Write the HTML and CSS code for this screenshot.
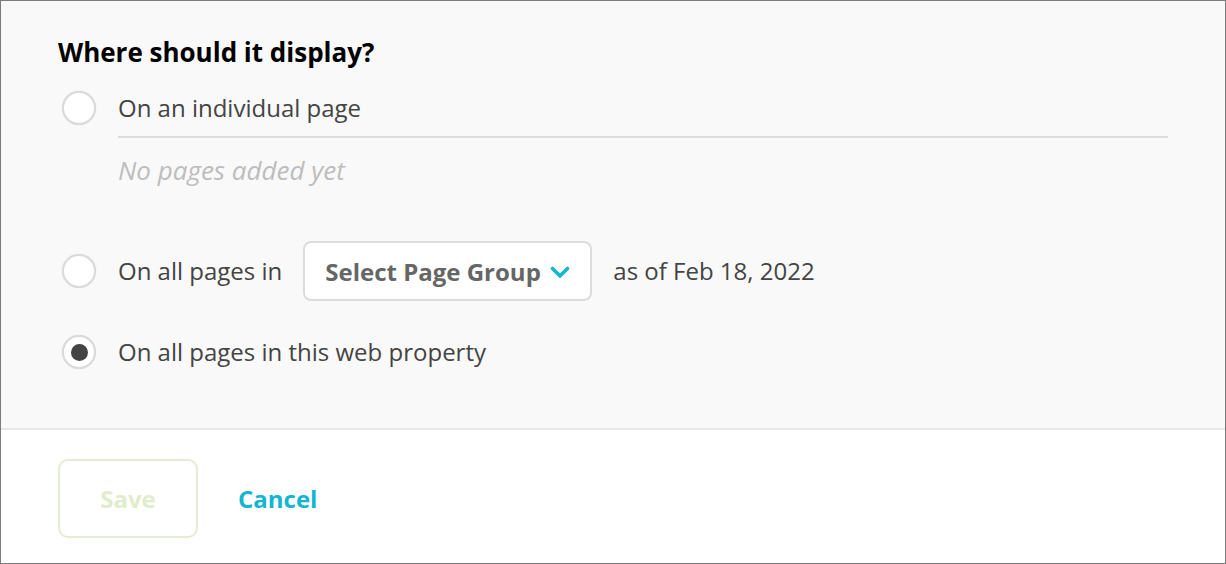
FILE: index.html
```html
<!DOCTYPE html>
<html lang="en">
<head>
<meta charset="utf-8">
<title>Where should it display?</title>
<link rel="stylesheet" href="styles.css">
</head>
<body>
<div class="frame">
  <section class="panel">
    <h2 class="title">Where should it display?</h2>
    <div class="option">
      <span class="radio"></span>
      <span class="label">On an individual page</span>
    </div>
    <div class="pages">
      <div class="divider"></div>
      <div class="empty">No pages added yet</div>
    </div>
    <div class="option option-select">
      <span class="radio"></span>
      <span class="label">On all pages in</span>
      <button class="select" type="button">
        <span>Select Page Group</span>
        <svg class="chevron" width="20" height="13" viewBox="0 0 20 13" aria-hidden="true"><polyline points="2.5,2.5 10,10 17.5,2.5" fill="none" stroke="#14b6d4" stroke-width="3.6" stroke-linecap="round" stroke-linejoin="round"/></svg>
      </button>
      <span class="label">as of Feb 18, 2022</span>
    </div>
    <div class="option option-last">
      <span class="radio checked"></span>
      <span class="label">On all pages in this web property</span>
    </div>
  </section>
  <footer class="footer">
    <button class="btn-save" type="button" disabled>Save</button>
    <button class="btn-cancel" type="button">Cancel</button>
  </footer>
</div>
</body>
</html>
```
FILE: styles.css
```css
* { box-sizing: border-box; }
html, body { margin: 0; padding: 0; }
body {
  font-family: "Open Sans", "Liberation Sans", sans-serif;
  color: #444;
  background: #fff;
}
.frame {
  width: 1226px;
  height: 564px;
  border: 1px solid #7b7b7b;
  display: flex;
  flex-direction: column;
  overflow: hidden;
}
.panel {
  background: #f9f9f9;
  padding: 34px 57px 56px 57px;
  height: 427px;
  flex: none;
}
.title {
  margin: 0;
  font-size: 26px;
  line-height: 34px;
  font-weight: 700;
  color: #000;
}
.option {
  display: flex;
  align-items: center;
  height: 40px;
  margin-top: 19px;
}
.radio {
  flex: none;
  width: 34px;
  height: 34px;
  margin-left: 4px;
  margin-right: 22px;
  border-radius: 50%;
  background: #fff;
  border: 2px solid #dadada;
  box-shadow: 0 0 1px rgba(0,0,0,0.15);
  display: flex;
  align-items: center;
  justify-content: center;
}
.radio.checked::after {
  content: "";
  width: 17px;
  height: 17px;
  border-radius: 50%;
  background: #444;
}
.label {
  font-size: 24px;
  line-height: 32px;
  color: #444;
}
.pages {
  margin-left: 60px;
  padding-top: 8px;
}
.divider {
  height: 2px;
  background: #dcdcdc;
}
.empty {
  margin-top: 16px;
  font-size: 26px;
  line-height: 32px;
  font-style: italic;
  color: #bdbdbd;
}
.option-select {
  height: 60px;
  margin-top: 55px;
}
.select {
  margin: 0 21px;
  height: 60px;
  width: 289px;
  padding: 0 0 0 20px;
  border: 2px solid #dcdcdc;
  border-radius: 8px;
  background: #fff;
  font-family: inherit;
  font-size: 24px;
  font-weight: 700;
  color: #666;
  display: flex;
  align-items: center;
  justify-content: flex-start;
  gap: 9px;
}
.chevron { flex: none; margin-top: 2px; }
.option-last { margin-top: 31px; }
.footer {
  flex: 1;
  border-top: 2px solid #e7e7e7;
  background: #fff;
  padding: 29px 57px 0 57px;
  display: flex;
  align-items: flex-start;
}
.btn-save {
  width: 140px;
  height: 79px;
  border: 2px solid #e5eed2;
  border-radius: 10px;
  background: #fff;
  font-family: inherit;
  font-size: 24px;
  font-weight: 700;
  color: #e1ecca;
}
.btn-cancel {
  margin-left: 40px;
  height: 79px;
  padding: 0;
  border: 0;
  background: none;
  font-family: inherit;
  font-size: 24px;
  font-weight: 700;
  color: #12b5d2;
}
```
